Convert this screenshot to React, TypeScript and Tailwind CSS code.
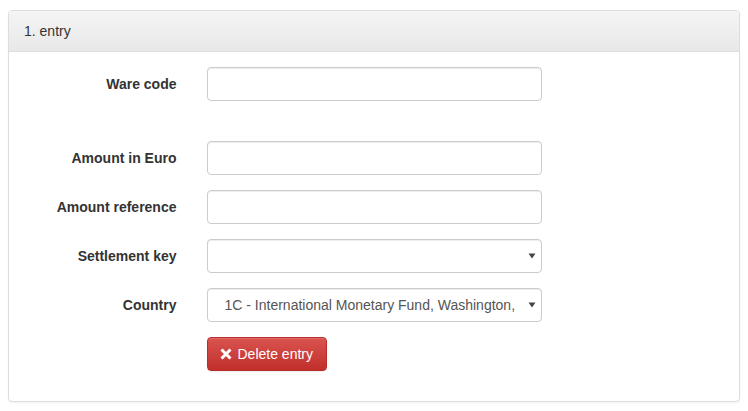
import React from "react";

function Label({ children }: { children: React.ReactNode }) {
  return (
    <div className="w-[182.5px] shrink-0 px-[15px] pt-[7px] text-right font-bold leading-[20px]">
      {children}
    </div>
  );
}

function Input() {
  return (
    <div className="h-[34px] w-full rounded-[4px] border border-[#ccc] bg-white shadow-[inset_0_1px_1px_rgba(0,0,0,0.075)]" />
  );
}

function Select({ value }: { value?: string }) {
  return (
    <div className="flex h-[34px] w-full items-center rounded-[4px] border border-[#ccc] bg-white pl-[17px] pr-[5px] text-[#555] shadow-[inset_0_1px_1px_rgba(0,0,0,0.075)]">
      <span className="flex-1 overflow-hidden whitespace-nowrap leading-[20px]">{value ?? ""}</span>
      <svg width="8" height="6" viewBox="0 0 8 6" className="ml-2 shrink-0">
        <path d="M0.5 0.5 L7.5 0.5 L4 5.5 Z" fill="#444" />
      </svg>
    </div>
  );
}

function Row({ label, children, mb = "mb-[15px]" }: { label: string; children: React.ReactNode; mb?: string }) {
  return (
    <div className={`flex mx-[-15px] ${mb}`}>
      <Label>{label}</Label>
      <div className="w-[365px] shrink-0 px-[15px]">{children}</div>
    </div>
  );
}

export default function App() {
  return (
    <div
      className="min-h-[411px] w-[748px] bg-white pt-[10px] px-[8px] text-[14px] text-[#333]"
      style={{ fontFamily: '"Liberation Sans", Arial, Helvetica, sans-serif' }}
    >
      <div className="rounded-[4px] border border-[#ddd] bg-white shadow-[0_1px_2px_rgba(0,0,0,0.05)]">
        <div className="rounded-t-[3px] border-b border-[#ddd] bg-gradient-to-b from-[#f5f5f5] to-[#e8e8e8] px-[15px] py-[10px] leading-[20px]">
          1. entry
        </div>
        <div className="p-[15px]">
          <Row label="Ware code" mb="mb-[40px]">
            <Input />
          </Row>
          <Row label="Amount in Euro">
            <Input />
          </Row>
          <Row label="Amount reference">
            <Input />
          </Row>
          <Row label="Settlement key">
            <Select />
          </Row>
          <Row label="Country">
            <Select value="1C - International Monetary Fund, Washington," />
          </Row>
          <div className="mx-[-15px] mb-[15px] flex">
            <div className="w-[182.5px] shrink-0" />
            <div className="px-[15px]">
              <button className="flex h-[34px] items-center gap-[6px] rounded-[4px] border border-[#b92c28] bg-gradient-to-b from-[#d9534f] to-[#c12e2a] pl-[12px] pr-[13px] leading-[20px] text-white shadow-[inset_0_1px_0_rgba(255,255,255,0.15),0_1px_1px_rgba(0,0,0,0.075)]">
                <svg width="12" height="12" viewBox="0 0 12 12" className="mt-[-1px]">
                  <path d="M1.5 1.5 L10.5 10.5 M10.5 1.5 L1.5 10.5" stroke="white" strokeWidth="3" strokeLinecap="butt" />
                </svg>
                <span>Delete entry</span>
              </button>
            </div>
          </div>
        </div>
      </div>
    </div>
  );
}
